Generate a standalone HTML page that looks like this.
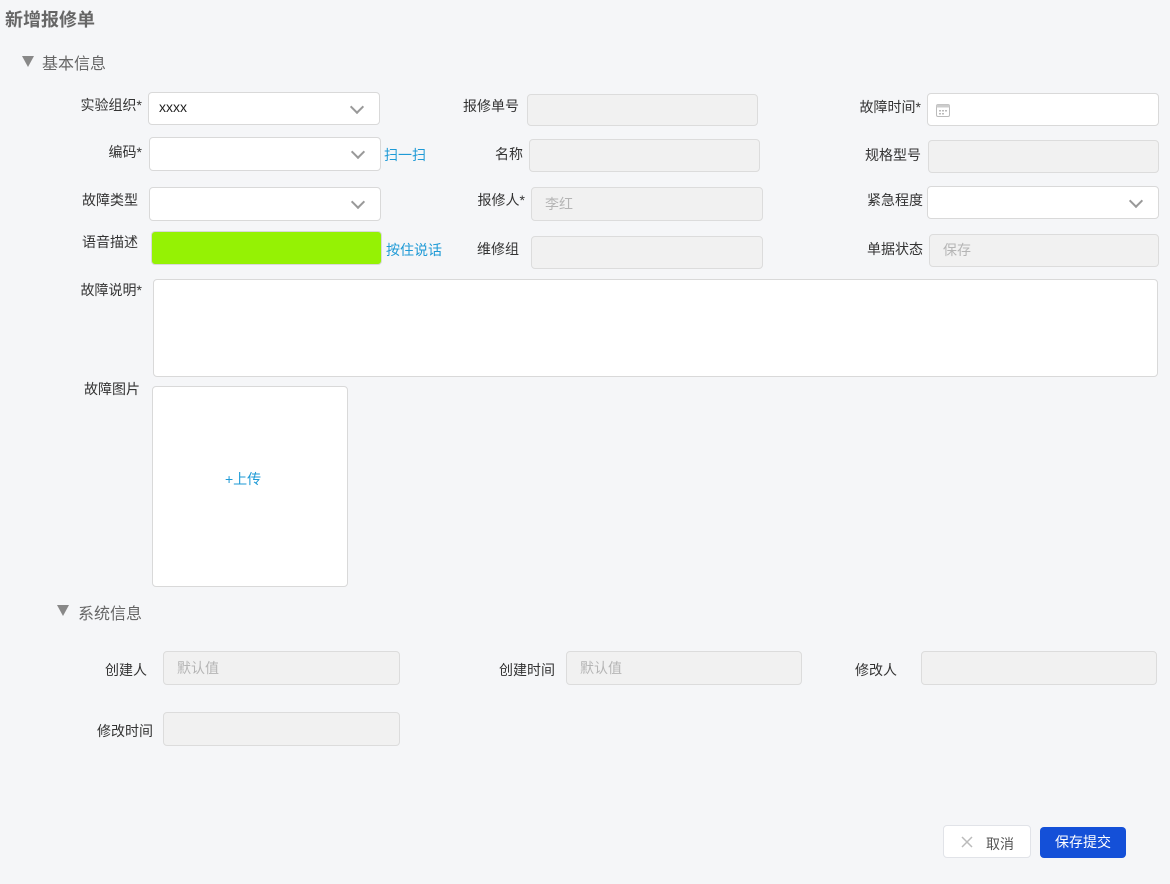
<!DOCTYPE html>
<html><head><meta charset="utf-8"><style>
body{margin:0;width:1170px;height:884px;background:#f5f6f8;font-family:"Liberation Sans","Noto Sans CJK SC",sans-serif;position:relative;overflow:hidden;color:#333}
.a{position:absolute}
.l{position:absolute;font-size:14px;color:#333;text-align:right;width:120px;line-height:20px;white-space:nowrap}
.i{position:absolute;background:#fff;border:1px solid #d9d9d9;border-radius:4px;box-sizing:border-box}
.d{position:absolute;background:#f1f1f1;border:1px solid #dcdcdc;border-radius:4px;box-sizing:border-box;font-size:14px;color:#b5b5b5;padding-left:13px}
.ch{position:absolute;right:17px;top:50%;width:8px;height:8px;border-right:2px solid #999;border-bottom:2px solid #999;transform:rotate(45deg);margin-top:-7px}
.blue{color:#1e9ad6;font-size:14px}
.tri{position:absolute;width:0;height:0;border-left:6px solid transparent;border-right:6px solid transparent;border-top:11px solid #888}
</style></head><body>
<div class="a" style="left:5px;top:6px;font-size:18px;font-weight:bold;color:#666">新增报修单</div>
<div class="tri" style="left:22px;top:56px"></div>
<div class="a" style="left:42px;top:50px;font-size:16px;color:#666">基本信息</div>

<div class="l" style="left:22px;top:95px">实验组织*</div>
<div class="i" style="left:148px;top:92px;width:232px;height:33px"><span class="a" style="left:10px;top:6px;font-size:14px;color:#222">xxxx</span><div class="ch"></div></div>
<div class="l" style="left:399px;top:96px">报修单号</div>
<div class="d" style="left:527px;top:94px;width:231px;height:32px"></div>
<div class="l" style="left:801px;top:97px">故障时间*</div>
<div class="i" style="left:927px;top:93px;width:232px;height:33px">
<svg class="a" style="left:7px;top:8px" width="16" height="16" viewBox="0 0 16 16"><rect x="1.5" y="2.5" width="13" height="12" rx="1.5" fill="none" stroke="#bbb"/><rect x="1.5" y="2.5" width="13" height="3" fill="#ccc"/><g fill="#bbb"><rect x="4" y="8" width="2" height="1.5"/><rect x="7" y="8" width="2" height="1.5"/><rect x="10" y="8" width="2" height="1.5"/><rect x="4" y="11" width="2" height="1.5"/><rect x="7" y="11" width="2" height="1.5"/></g></svg></div>

<div class="l" style="left:22px;top:142px">编码*</div>
<div class="i" style="left:149px;top:137px;width:232px;height:34px"><div class="ch"></div></div>
<div class="a blue" style="left:384px;top:145px">扫一扫</div>
<div class="l" style="left:403px;top:144px">名称</div>
<div class="d" style="left:529px;top:139px;width:231px;height:33px"></div>
<div class="l" style="left:801px;top:145px">规格型号</div>
<div class="d" style="left:928px;top:140px;width:231px;height:33px"></div>

<div class="l" style="left:18px;top:190px">故障类型</div>
<div class="i" style="left:149px;top:187px;width:232px;height:34px"><div class="ch"></div></div>
<div class="l" style="left:405px;top:190px">报修人*</div>
<div class="d" style="left:531px;top:187px;width:232px;height:34px;line-height:32px">李红</div>
<div class="l" style="left:803px;top:190px">紧急程度</div>
<div class="i" style="left:927px;top:186px;width:232px;height:33px"><div class="ch"></div></div>

<div class="l" style="left:18px;top:232px">语音描述</div>
<div class="a" style="left:151px;top:231px;width:231px;height:34px;background:#95f204;border:1px solid #d9d9d9;border-radius:4px;box-sizing:border-box"></div>
<div class="a blue" style="left:386px;top:240px">按住说话</div>
<div class="l" style="left:399px;top:239px">维修组</div>
<div class="d" style="left:531px;top:236px;width:232px;height:33px"></div>
<div class="l" style="left:803px;top:239px">单据状态</div>
<div class="d" style="left:929px;top:234px;width:230px;height:33px;line-height:31px">保存</div>

<div class="l" style="left:22px;top:280px">故障说明*</div>
<div class="i" style="left:153px;top:279px;width:1005px;height:98px"></div>

<div class="l" style="left:20px;top:379px">故障图片</div>
<div class="i" style="left:152px;top:386px;width:196px;height:201px"><div class="a blue" style="left:72px;top:82px">+上传</div></div>

<div class="tri" style="left:57px;top:605px"></div>
<div class="a" style="left:78px;top:600px;font-size:16px;color:#666">系统信息</div>

<div class="l" style="left:27px;top:660px">创建人</div>
<div class="d" style="left:163px;top:651px;width:237px;height:34px;line-height:32px">默认值</div>
<div class="l" style="left:435px;top:660px">创建时间</div>
<div class="d" style="left:566px;top:651px;width:236px;height:34px;line-height:32px">默认值</div>
<div class="l" style="left:777px;top:660px">修改人</div>
<div class="d" style="left:921px;top:651px;width:236px;height:34px"></div>
<div class="l" style="left:33px;top:721px">修改时间</div>
<div class="d" style="left:163px;top:712px;width:237px;height:34px"></div>

<div class="a" style="left:943px;top:825px;width:88px;height:33px;background:#fff;border:1px solid #e1e3e8;border-radius:4px;box-sizing:border-box">
<svg class="a" style="left:17px;top:10px" width="12" height="12"><path d="M1 1L11 11M11 1L1 11" stroke="#bbb" stroke-width="1.5"/></svg>
<span class="a" style="left:42px;top:8px;font-size:14px;color:#555">取消</span></div>
<div class="a" style="left:1040px;top:827px;width:86px;height:31px;background:#1450d8;border-radius:4px;color:#fff;font-size:14px;text-align:center;line-height:31px">保存提交</div>
</body></html>
